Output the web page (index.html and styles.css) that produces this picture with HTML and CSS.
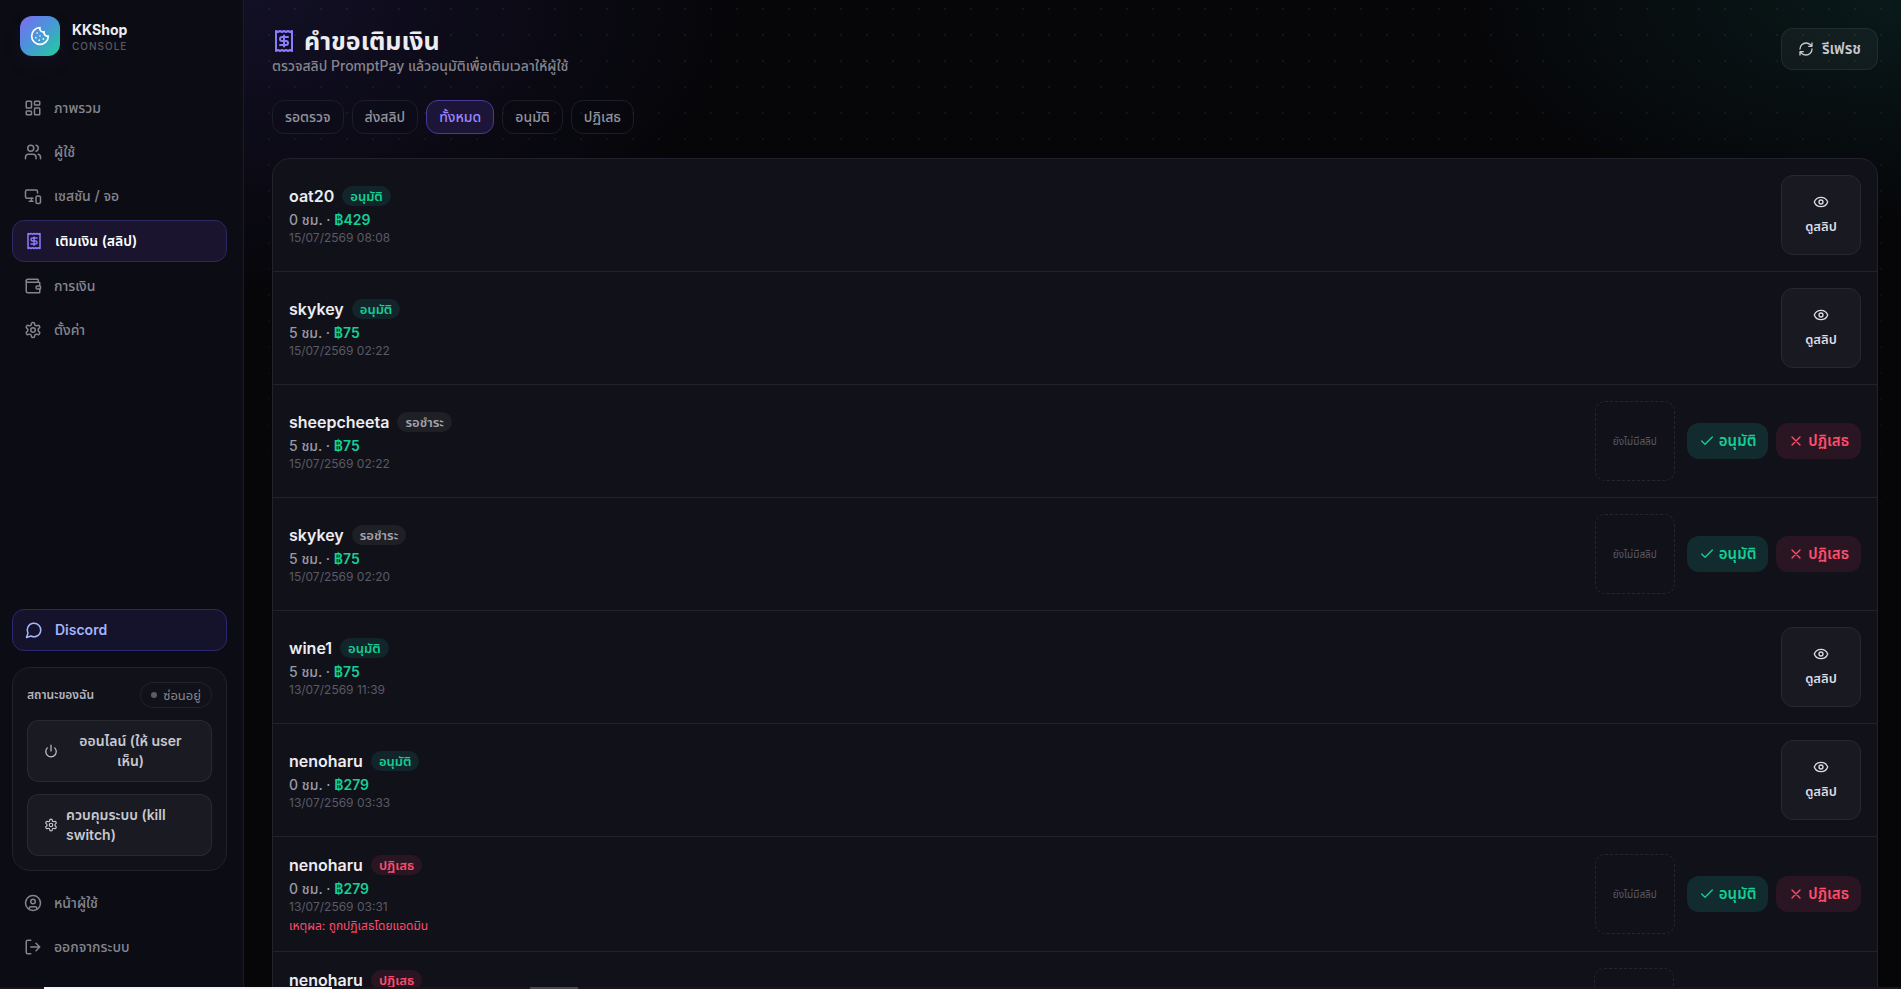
FILE: index.html
```html
<!DOCTYPE html>
<html lang="th">
<head>
  <meta charset="UTF-8">
  <meta name="viewport" content="width=device-width, initial-scale=1">
  <title>KKShop Console</title>
  <link rel="stylesheet" href="styles.css">
</head>
<body>
  <svg class="sprite" aria-hidden="true">
    <symbol id="i-cookie" viewBox="0 0 24 24"><path d="M12 2a10 10 0 1 0 10 10 4 4 0 0 1-5-5 4 4 0 0 1-5-5"/><path d="M8.500 8.500v.01M16 15.500v.01M12 12v.01M11 17v.01M7 14v.01"/></symbol>
    <symbol id="i-grid" viewBox="0 0 24 24"><rect width="7" height="9" x="3" y="3" rx="1"/><rect width="7" height="5" x="14" y="3" rx="1"/><rect width="7" height="9" x="14" y="12" rx="1"/><rect width="7" height="5" x="3" y="16" rx="1"/></symbol>
    <symbol id="i-users" viewBox="0 0 24 24"><path d="M16 21v-2a4 4 0 0 0-4-4H6a4 4 0 0 0-4 4v2"/><circle cx="9" cy="7" r="4"/><path d="M22 21v-2a4 4 0 0 0-3-3.870M16 3.130a4 4 0 0 1 0 7.750"/></symbol>
    <symbol id="i-screens" viewBox="0 0 24 24"><path d="M18 8V6a2 2 0 0 0-2-2H4a2 2 0 0 0-2 2v7a2 2 0 0 0 2 2h8"/><path d="M10 19v-3.960 3.150M7 19h5"/><rect width="6" height="10" x="16" y="12" rx="2"/></symbol>
    <symbol id="i-receipt" viewBox="0 0 24 24"><path d="M4 2v20l2-1 2 1 2-1 2 1 2-1 2 1 2-1 2 1V2l-2 1-2-1-2 1-2-1-2 1-2-1-2 1Z"/><path d="M16 8h-6a2 2 0 1 0 0 4h4a2 2 0 1 1 0 4H8M12 17.500v-11"/></symbol>
    <symbol id="i-wallet" viewBox="0 0 24 24"><path d="M19 7V4a1 1 0 0 0-1-1H5a2 2 0 0 0 0 4h15a1 1 0 0 1 1 1v4h-3a2 2 0 0 0 0 4h3a1 1 0 0 0 1-1v-2a1 1 0 0 0-1-1"/><path d="M3 5v14a2 2 0 0 0 2 2h15a1 1 0 0 0 1-1v-4"/></symbol>
    <symbol id="i-gear" viewBox="0 0 24 24"><path d="M12.220 2h-.44a2 2 0 0 0-2 2v.18a2 2 0 0 1-1 1.730l-.43.25a2 2 0 0 1-2 0l-.15-.08a2 2 0 0 0-2.730.73l-.22.38a2 2 0 0 0 .73 2.730l.15.1a2 2 0 0 1 1 1.720v.51a2 2 0 0 1-1 1.740l-.15.09a2 2 0 0 0-.73 2.730l.22.38a2 2 0 0 0 2.730.73l.15-.08a2 2 0 0 1 2 0l.43.25a2 2 0 0 1 1 1.730V20a2 2 0 0 0 2 2h.44a2 2 0 0 0 2-2v-.18a2 2 0 0 1 1-1.730l.43-.25a2 2 0 0 1 2 0l.15.08a2 2 0 0 0 2.730-.73l.22-.39a2 2 0 0 0-.73-2.730l-.15-.08a2 2 0 0 1-1-1.740v-.5a2 2 0 0 1 1-1.740l.15-.09a2 2 0 0 0 .73-2.730l-.22-.38a2 2 0 0 0-2.730-.73l-.15.08a2 2 0 0 1-2 0l-.43-.25a2 2 0 0 1-1-1.730V4a2 2 0 0 0-2-2z"/><circle cx="12" cy="12" r="3"/></symbol>
    <symbol id="i-chat" viewBox="0 0 24 24"><path d="M7.900 20A9 9 0 1 0 4 16.100L2 22Z"/></symbol>
    <symbol id="i-power" viewBox="0 0 24 24"><path d="M12 2v10M18.400 6.600a9 9 0 1 1-12.770.04"/></symbol>
    <symbol id="i-user" viewBox="0 0 24 24"><circle cx="12" cy="12" r="10"/><circle cx="12" cy="10" r="3"/><path d="M7 20.660V19a2 2 0 0 1 2-2h6a2 2 0 0 1 2 2v1.660"/></symbol>
    <symbol id="i-logout" viewBox="0 0 24 24"><path d="M9 21H5a2 2 0 0 1-2-2V5a2 2 0 0 1 2-2h4M16 17l5-5-5-5M21 12H9"/></symbol>
    <symbol id="i-refresh" viewBox="0 0 24 24"><path d="M3 12a9 9 0 0 1 9-9 9.750 9.750 0 0 1 6.740 2.740L21 8M21 3v5h-5M21 12a9 9 0 0 1-9 9 9.750 9.750 0 0 1-6.740-2.740L3 16M8 16H3v5"/></symbol>
    <symbol id="i-eye" viewBox="0 0 24 24"><path d="M2.060 12.350a1 1 0 0 1 0-.7 10.750 10.750 0 0 1 19.880 0 1 1 0 0 1 0 .7 10.750 10.750 0 0 1-19.880 0"/><circle cx="12" cy="12" r="3"/></symbol>
    <symbol id="i-check" viewBox="0 0 24 24"><path d="M20 6 9 17l-5-5"/></symbol>
    <symbol id="i-x" viewBox="0 0 24 24"><path d="M18 6 6 18M6 6l12 12"/></symbol>
  </svg>

  <div class="app">
    <aside class="sidebar">
      <div class="brand">
        <div class="brand-logo"><svg class="icon icon-md"><use href="#i-cookie"/></svg></div>
        <div>
          <div class="brand-name">KKShop</div>
          <div class="brand-sub">CONSOLE</div>
        </div>
      </div>

      <nav class="nav">
        <a href="#overview" class="nav-item"><svg class="icon"><use href="#i-grid"/></svg>ภาพรวม</a>
        <a href="#users" class="nav-item"><svg class="icon"><use href="#i-users"/></svg>ผู้ใช้</a>
        <a href="#sessions" class="nav-item"><svg class="icon"><use href="#i-screens"/></svg>เซสชัน / จอ</a>
        <a href="#topups" class="nav-item active"><svg class="icon"><use href="#i-receipt"/></svg>เติมเงิน (สลิป)</a>
        <a href="#finance" class="nav-item"><svg class="icon"><use href="#i-wallet"/></svg>การเงิน</a>
        <a href="#settings" class="nav-item"><svg class="icon"><use href="#i-gear"/></svg>ตั้งค่า</a>
      </nav>

      <div class="sidebar-foot">
        <a href="#discord" class="nav-item discord"><svg class="icon"><use href="#i-chat"/></svg>Discord</a>
        <div class="status-card">
          <div class="status-head">
            <span class="status-label">สถานะของฉัน</span>
            <span class="status-pill"><i class="dot"></i>ซ่อนอยู่</span>
          </div>
          <button type="button" class="btn btn-center"><svg class="icon icon-xs"><use href="#i-power"/></svg><span>ออนไลน์ (ให้ user เห็น)</span></button>
          <button type="button" class="btn btn-left"><svg class="icon icon-xs"><use href="#i-gear"/></svg><span>ควบคุมระบบ (kill switch)</span></button>
        </div>
        <nav class="nav">
          <a href="#me" class="nav-item"><svg class="icon"><use href="#i-user"/></svg>หน้าผู้ใช้</a>
          <a href="#logout" class="nav-item"><svg class="icon"><use href="#i-logout"/></svg>ออกจากระบบ</a>
        </nav>
      </div>
    </aside>

    <main class="main">
      <header class="page-head">
        <div>
          <h1><svg class="icon icon-lg"><use href="#i-receipt"/></svg>คำขอเติมเงิน</h1>
          <p class="subtitle">ตรวจสลิป PromptPay แล้วอนุมัติเพื่อเติมเวลาให้ผู้ใช้</p>
        </div>
        <button type="button" class="btn btn-refresh"><svg class="icon icon-sm"><use href="#i-refresh"/></svg>รีเฟรช</button>
      </header>

      <div class="filters">
        <button type="button" class="chip">รอตรวจ</button>
        <button type="button" class="chip">ส่งสลิป</button>
        <button type="button" class="chip selected">ทั้งหมด</button>
        <button type="button" class="chip">อนุมัติ</button>
        <button type="button" class="chip">ปฏิเสธ</button>
      </div>

      <section class="panel">
        <article class="row">
          <div class="info">
            <div class="name">oat20 <span class="badge ok">อนุมัติ</span></div>
            <div class="amount">0 ชม. · <b>฿429</b></div>
            <div class="date">15/07/2569 08:08</div>
          </div>
          <button type="button" class="view"><svg class="icon icon-sm"><use href="#i-eye"/></svg>ดูสลิป</button>
        </article>
        <article class="row">
          <div class="info">
            <div class="name">skykey <span class="badge ok">อนุมัติ</span></div>
            <div class="amount">5 ชม. · <b>฿75</b></div>
            <div class="date">15/07/2569 02:22</div>
          </div>
          <button type="button" class="view"><svg class="icon icon-sm"><use href="#i-eye"/></svg>ดูสลิป</button>
        </article>
        <article class="row">
          <div class="info">
            <div class="name">sheepcheeta <span class="badge">รอชำระ</span></div>
            <div class="amount">5 ชม. · <b>฿75</b></div>
            <div class="date">15/07/2569 02:22</div>
          </div>
          <div class="no-slip">ยังไม่มีสลิป</div>
          <div class="actions">
            <button type="button" class="act approve"><svg class="icon icon-sm"><use href="#i-check"/></svg>อนุมัติ</button>
            <button type="button" class="act reject"><svg class="icon icon-sm"><use href="#i-x"/></svg>ปฏิเสธ</button>
          </div>
        </article>
        <article class="row">
          <div class="info">
            <div class="name">skykey <span class="badge">รอชำระ</span></div>
            <div class="amount">5 ชม. · <b>฿75</b></div>
            <div class="date">15/07/2569 02:20</div>
          </div>
          <div class="no-slip">ยังไม่มีสลิป</div>
          <div class="actions">
            <button type="button" class="act approve"><svg class="icon icon-sm"><use href="#i-check"/></svg>อนุมัติ</button>
            <button type="button" class="act reject"><svg class="icon icon-sm"><use href="#i-x"/></svg>ปฏิเสธ</button>
          </div>
        </article>
        <article class="row">
          <div class="info">
            <div class="name">wine1 <span class="badge ok">อนุมัติ</span></div>
            <div class="amount">5 ชม. · <b>฿75</b></div>
            <div class="date">13/07/2569 11:39</div>
          </div>
          <button type="button" class="view"><svg class="icon icon-sm"><use href="#i-eye"/></svg>ดูสลิป</button>
        </article>
        <article class="row">
          <div class="info">
            <div class="name">nenoharu <span class="badge ok">อนุมัติ</span></div>
            <div class="amount">0 ชม. · <b>฿279</b></div>
            <div class="date">13/07/2569 03:33</div>
          </div>
          <button type="button" class="view"><svg class="icon icon-sm"><use href="#i-eye"/></svg>ดูสลิป</button>
        </article>
        <article class="row">
          <div class="info">
            <div class="name">nenoharu <span class="badge bad">ปฏิเสธ</span></div>
            <div class="amount">0 ชม. · <b>฿279</b></div>
            <div class="date">13/07/2569 03:31</div>
            <div class="reason">เหตุผล: ถูกปฏิเสธโดยแอดมิน</div>
          </div>
          <div class="no-slip">ยังไม่มีสลิป</div>
          <div class="actions">
            <button type="button" class="act approve"><svg class="icon icon-sm"><use href="#i-check"/></svg>อนุมัติ</button>
            <button type="button" class="act reject"><svg class="icon icon-sm"><use href="#i-x"/></svg>ปฏิเสธ</button>
          </div>
        </article>
        <article class="row">
          <div class="info">
            <div class="name">nenoharu <span class="badge bad">ปฏิเสธ</span></div>
          </div>
          <div class="no-slip"></div>
        </article>
      </section>
    </main>
  </div>
  <div class="edge"></div>
</body>
</html>
```
FILE: styles.css
```css
:root {
  --text: #ececf1;
  --muted: #85858f;
  --faint: #5a5a64;
  --line: #22222c;
  --accent: #8b7bff;
  --green: #14cf97;
  --red: #ff4d6d;
}

* {
  box-sizing: border-box;
}

body {
  margin: 0;
  height: 100vh;
  overflow: hidden;
  background: #060609;
  color: var(--text);
  font-family: Inter, "Noto Sans Thai", "Noto Sans", sans-serif;
  font-size: 14px;
  line-height: 20px;
}

button {
  font: inherit;
  color: inherit;
  cursor: pointer;
}

a {
  color: inherit;
  text-decoration: none;
}

.sprite {
  display: none;
}

.icon {
  width: 18px;
  height: 18px;
  flex: none;
  fill: none;
  stroke: currentColor;
  stroke-width: 2;
  stroke-linecap: round;
  stroke-linejoin: round;
}

.icon-xs {
  width: 14px;
  height: 14px;
}

.icon-sm {
  width: 16px;
  height: 16px;
}

.icon-md {
  width: 20px;
  height: 20px;
}

.icon-lg {
  width: 24px;
  height: 24px;
  color: var(--accent);
}

.app {
  display: flex;
  height: 100vh;
}

/* sidebar */
.sidebar {
  width: 244px;
  flex: none;
  display: flex;
  flex-direction: column;
  padding: 16px 16px 22px 12px;
  background: #0c0c14;
  border-right: 1px solid #1b1b24;
}

.brand {
  display: flex;
  align-items: center;
  gap: 12px;
  padding: 0 8px;
  margin-bottom: 32px;
}

.brand-logo {
  width: 40px;
  height: 40px;
  display: grid;
  place-items: center;
  border-radius: 12px;
  color: #fff;
  background: linear-gradient(135deg, #7c6cf0 0%, #4b93dc 45%, #1fcf9a 100%);
  box-shadow: 0 8px 24px rgba(124, 108, 240, 0.06);
}

.brand-name {
  padding-top: 2px;
  font-weight: 700;
  line-height: 18px;
}

.brand-sub {
  color: var(--faint);
  font-size: 10px;
  font-weight: 500;
  letter-spacing: 1px;
  line-height: 14px;
}

.nav {
  display: flex;
  flex-direction: column;
  gap: 4px;
}

.nav-item {
  display: flex;
  align-items: center;
  gap: 12px;
  padding: 10px 12px;
  border-radius: 12px;
  color: var(--muted);
  font-weight: 500;
}

.nav-item.active {
  border: 1px solid #2d2763;
  background: #1a142e;
  color: #fff;
  font-weight: 600;
}

.nav-item.active .icon {
  color: var(--accent);
}

.sidebar-foot {
  margin-top: auto;
}

.nav-item.discord {
  border: 1px solid #2b2870;
  background: #14132b;
  color: #a5b4fc;
  font-weight: 600;
}

.status-card {
  display: flex;
  flex-direction: column;
  gap: 12px;
  margin: 16px 0 12px;
  padding: 14px;
  border: 1px solid var(--line);
  border-radius: 18px;
  background: #111119;
}

.status-head {
  display: flex;
  align-items: center;
  justify-content: space-between;
}

.status-label {
  color: #b4b4be;
  font-size: 12px;
  font-weight: 600;
}

.status-pill {
  display: flex;
  align-items: center;
  gap: 6px;
  padding: 3px 10px;
  border: 1px solid var(--line);
  border-radius: 13px;
  color: var(--muted);
  font-size: 13px;
  line-height: 18px;
}

.dot {
  width: 6px;
  height: 6px;
  border-radius: 50%;
  background: #5c5c66;
}

.btn {
  display: flex;
  align-items: center;
  gap: 8px;
  padding: 10px 16px;
  border: 1px solid rgba(255, 255, 255, 0.07);
  border-radius: 12px;
  background: rgba(255, 255, 255, 0.04);
  color: #c8c8d0;
  font-weight: 600;
}

.btn-center span {
  flex: 1;
  text-align: center;
}

.btn-left {
  text-align: left;
}

.btn-refresh {
  font-size: 15px;
}

/* content */
.main {
  flex: 1;
  min-width: 0;
  padding: 28px 23px 28px 28px;
  overflow: hidden;
  background:
    radial-gradient(ellipse 500px 300px at 0 0, rgba(88, 70, 200, 0.15), transparent),
    radial-gradient(ellipse 440px 220px at 100% 0, rgba(30, 140, 125, 0.14), transparent),
    linear-gradient(transparent, #060609 640px),
    radial-gradient(circle, rgba(255, 255, 255, 0.06) 1px, transparent 1px) 12px -4px / 26px 26px,
    #060609;
}

.page-head {
  display: flex;
  align-items: flex-start;
  justify-content: space-between;
  margin-bottom: 24px;
}

h1 {
  display: flex;
  align-items: center;
  gap: 8px;
  margin: 0;
  font-size: 25px;
  font-weight: 700;
  line-height: 26px;
}

.subtitle {
  margin: 2px 0 0;
  color: var(--muted);
  font-weight: 500;
}

.filters {
  display: flex;
  gap: 8px;
  margin-bottom: 24px;
}

.chip {
  height: 34px;
  padding: 0 12px;
  border: 1px solid #1d1d27;
  border-radius: 12px;
  background: transparent;
  color: #93939d;
  font-weight: 500;
}

.chip.selected {
  border-color: #4a3c96;
  background: #1c1538;
  color: #9a86ff;
}

.panel {
  border: 1px solid var(--line);
  border-radius: 18px;
  background: #11111a;
}

.row {
  display: flex;
  align-items: center;
  gap: 12px;
  padding: 16px;
  border-bottom: 1px solid var(--line);
}

.row:last-child {
  align-items: flex-start;
  border-bottom: 0;
}

.info {
  flex: 1;
}

.name {
  display: flex;
  align-items: center;
  gap: 8px;
  margin-bottom: 2px;
  font-size: 16px;
  font-weight: 600;
  line-height: 24px;
}

.badge {
  padding: 0 8px;
  border-radius: 10px;
  background: #1f1f26;
  color: #a3a3ad;
  font-size: 13px;
  line-height: 20px;
}

.badge.ok {
  background: #11252a;
  color: var(--green);
}

.badge.bad {
  background: #2a1622;
  color: var(--red);
}

.amount {
  color: #9a9aa4;
  font-weight: 500;
}

.amount b {
  color: var(--green);
  font-weight: 600;
}

.date {
  color: var(--faint);
  font-size: 12px;
  line-height: 16px;
}

.reason {
  margin-top: 2px;
  color: var(--red);
  font-size: 12px;
  line-height: 18px;
}

.view {
  width: 80px;
  height: 80px;
  display: flex;
  flex-direction: column;
  align-items: center;
  justify-content: center;
  gap: 6px;
  border: 1px solid #282831;
  border-radius: 12px;
  background: #191922;
  color: #dcdce2;
  font-size: 13px;
  font-weight: 600;
}

.no-slip {
  width: 80px;
  height: 80px;
  display: grid;
  place-items: center;
  border: 1px dashed #262630;
  border-radius: 10px;
  color: var(--faint);
  font-size: 10px;
}

/* keeps the slip box in line with rows that have both actions */
.row:last-child .no-slip {
  margin-right: 187px;
}

.actions {
  display: flex;
  gap: 8px;
}

.act {
  display: flex;
  align-items: center;
  gap: 4px;
  height: 36px;
  padding: 0 12px;
  border: 0;
  border-radius: 12px;
  font-size: 15px;
  font-weight: 600;
}

.approve {
  background: #112b2e;
  color: var(--green);
}

.reject {
  background: #2a1622;
  color: var(--red);
}

/* thin strip along the bottom of the window */
.edge {
  position: fixed;
  left: 0;
  right: 0;
  bottom: 0;
  height: 2px;
  background: linear-gradient(90deg, #1c151c 44px, #f4f4f6 44px 332px, #1c151c 332px 530px, #4b464e 530px 578px, #1c151c 578px);
}
```
